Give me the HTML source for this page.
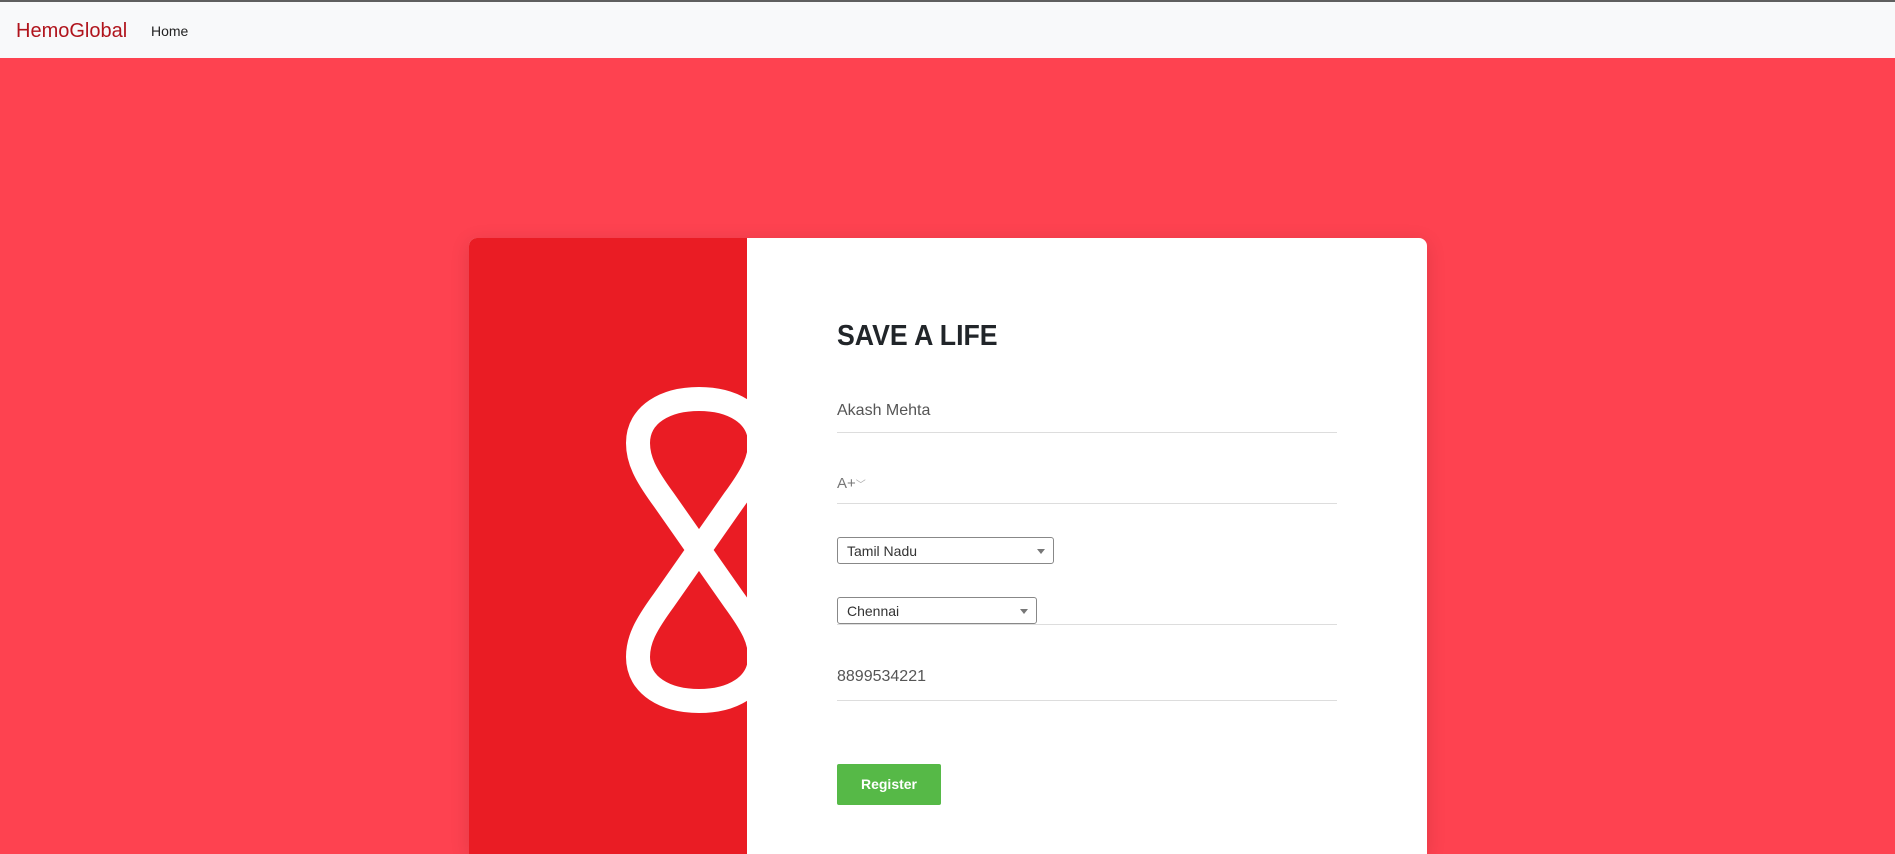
<!DOCTYPE html>
<html><head><style>
*{margin:0;padding:0;box-sizing:border-box}
html,body{width:1895px;height:854px;overflow:hidden}
body{background:#fe4250;font-family:"Liberation Sans",sans-serif;position:relative}
.top{position:absolute;left:0;top:0;width:1895px;height:2px;background:#5f5f5f}
.nav{position:absolute;left:0;top:2px;width:1895px;height:56px;background:#f8f9fa}
.brand{position:absolute;left:16px;top:18px;font-size:20px;color:#b0141c}
.home{position:absolute;left:151px;top:21px;font-size:14px;color:#222}
.card{position:absolute;left:469px;top:238px;width:958px;height:616px;background:#fff;border-radius:8px 8px 0 0;overflow:hidden;box-shadow:0 4px 20px rgba(0,0,0,.12)}
.left{position:absolute;left:0;top:0;width:278px;height:100%;background:#ea1c24}
h1{position:absolute;left:368px;top:82px;font-size:29px;font-weight:bold;color:#212529;transform:scaleX(.92);transform-origin:left}
.f{position:absolute;left:368px;width:500px;border-bottom:1px solid #ddd;font-size:16px;color:#555}
.sel{position:absolute;left:368px;height:27px;border:1px solid #888;border-radius:3px;font-size:14px;color:#333;padding:5px 9px;background:#fff}
.sel:after{content:"";position:absolute;right:8px;top:11px;border:4px solid transparent;border-top:5px solid #777}
.btn{position:absolute;left:368px;top:526px;width:104px;height:41px;background:#56b947;color:#fff;font-weight:bold;font-size:14px;text-align:center;line-height:41px;border-radius:2px}
</style></head><body>
<div class="top"></div>
<div class="nav"><div class="brand">HemoGlobal</div><div class="home">Home</div></div>
<div class="card">
<div class="left"><svg width="278" height="616" style="position:absolute;left:0;top:0">
<path d="M230,312 L195,262 C176,236 169,222 169,205 C169,176 197,161 230,161 C263,161 291,176 291,205 C291,222 284,236 265,262 L230,312 L195,362 C176,388 169,402 169,419 C169,448 197,463 230,463 C263,463 291,448 291,419 C291,402 284,388 265,362 Z" fill="none" stroke="#fff" stroke-width="24"/>
</svg></div>
<h1>SAVE A LIFE</h1>
<div class="f" style="top:164px;height:31px">Akash Mehta</div>
<div class="f" style="top:237px;height:29px;font-size:15px;color:#777">A+<span style="font-size:10px;color:#aaa">﹀</span></div>
<div class="sel" style="top:299px;width:217px">Tamil Nadu</div>
<div class="f" style="top:359px;height:28px"></div>
<div class="sel" style="top:359px;width:200px">Chennai</div>
<div class="f" style="top:430px;height:33px">8899534221</div>
<div class="btn">Register</div>
</div>
</body></html>
